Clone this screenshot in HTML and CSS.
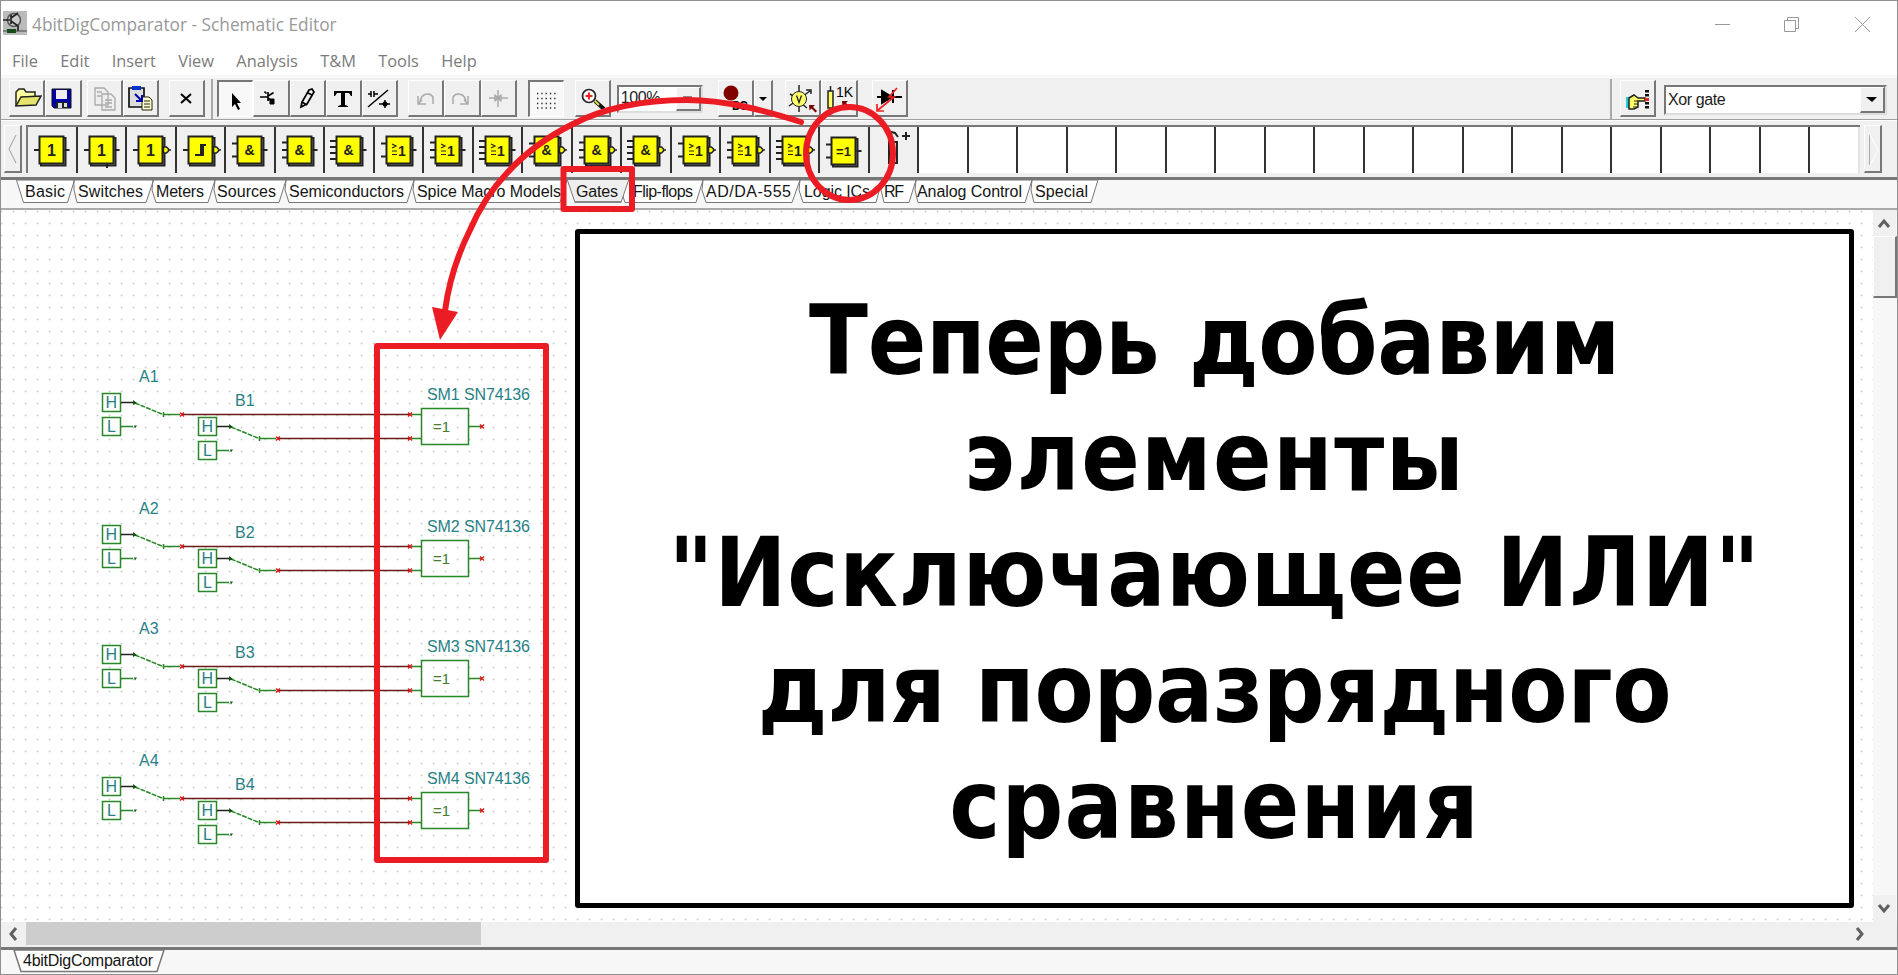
FILE: index.html
```html
<!DOCTYPE html>
<html lang="ru"><head><meta charset="utf-8"><title>4bitDigComparator - Schematic Editor</title>
<link rel="stylesheet" href="styles.css"></head>
<body>
<svg class="defs">
<defs>
<g id="box"><rect x="13" y="11" width="24.500" height="27.500" fill="#b4b4b4"/><rect x="11.500" y="9.500" width="24" height="27" fill="#ff0" stroke="#222" stroke-width="2"/></g>
<path id="in1" d="M6 23h5"/><path id="in2" d="M6 16.500h5M6 29.500h5"/><path id="in3" d="M6 15.500h5M6 23h5M6 30.500h5"/><path id="in4" d="M5 14h6M5 20h6M5 26h6M5 32h6"/>
<path id="out" d="M36.500 23h5"/><path id="inv" d="M36.500 20h3l2 2v2l-2 2h-3z M42 23h2" fill="#ff0" stroke-width="1.500"/>
<text id="and" class="gatetext" x="23.500" y="28" font-size="14">&amp;</text>
<g id="or"><path d="M17 17l4 2-4 2M17 24h5M17 27.500h5" stroke-width="1.200" fill="none"/><text class="gatetext" x="27" y="28.500" font-size="14">1</text></g>
<g id="sw"><path d="M.5.500h18v18H.5zM.5 24.500h18v18H.5zM19 33.500h12M61 21.500h17" class="grn"/><path d="M33 10l28 11.500" class="grn" stroke-dasharray="5 1"/><path d="M19 9.500h14" class="blk"/><path d="M31 7l4 3-4 2z" fill="#151"/><path d="M32 32.500h3l-2 3z" fill="#151"/><path d="M61.500 19v5" class="grn"/></g>
<g id="unit"><use href="#sw" x="102" y="394"/><use href="#sw" x="198" y="418"/>
<text x="105.500" y="409">H</text><text x="107" y="433">L</text><text x="201.500" y="433">H</text><text x="203" y="457">L</text>
<path d="M181 415.500h229M277 439.500h133" stroke="#6b1a1a" stroke-width="1.600"/>
<path d="M411 415.500h11M411 439.500h11M421.500 409.500h47v36h-47zM469 427.500h12" class="grn"/>
<path d="M180 413.500l4 4m0-4l-4 4M276 437.500l4 4m0-4l-4 4M408 413.500l4 4m0-4l-4 4M408 437.500l4 4m0-4l-4 4M480 425.500l4 4m0-4l-4 4" stroke="#e01818" stroke-width="1.400"/>
<text x="433" y="433" fill="#487c30" font-size="15">=1</text></g>
</defs></svg>
<div class="window">
<header class="title">
<svg class="appicon" viewBox="0 0 24 24"><path fill="#bbb" d="M0 0h24v24H0z"/><circle cx="11" cy="9" r="6.500" fill="#ccc" stroke="#555" stroke-width="1.500"/><path d="M0 9h7M8 4v9M8 7l7-5M8 10l7 5v5" stroke="#222" stroke-width="1.700" fill="none"/><path d="M0 20h24" stroke="#444"/><path d="M4 18h9v4H4z" fill="#164a16"/></svg>
<span>4bitDigComparator - Schematic Editor</span>
<svg class="winctl" width="160" height="20"><path d="M3 8.500h15M72.500 4.500h11v11h-11zM75.500 4v-2.500h11v11H84M143 1l15 15m0-15L143 16" fill="none" stroke="#999"/></svg>
</header>
<nav class="menu"><span>File</span><span>Edit</span><span>Insert</span><span>View</span><span>Analysis</span><span>T&amp;M</span><span>Tools</span><span>Help</span></nav>
<div class="toolbar">
<div class="group g1">
<b class="btn"><svg viewBox="0 0 32 32"><path d="M6 24V10l3-3h5l2 3h9v4" fill="#ffffa0" stroke="#222" stroke-width="1.500"/><path d="M6 24l5-9 20-1-5 9z" fill="#e4e46c" stroke="#222" stroke-width="1.500"/></svg></b>
<b class="btn"><svg viewBox="0 0 32 32"><path d="M6 7h19v19H8l-2-2z" fill="#0000a8" stroke="#111"/><path d="M10 8h11v9H10z" fill="#eee"/><path d="M10 20h12v6H10z" fill="#222"/><path d="M12 21h4v5h-4zM18 21h3v4h-3z" fill="#ddd"/></svg></b>
</div>
<div class="group g2">
<b class="btn"><svg viewBox="0 0 32 32" fill="#eee" stroke="#aaa" stroke-width="1.300"><path d="M7 6h9l4 4v13H7zM14 12h9l4 4v12H14z"/><path d="M9 10h5M9 14h4M17 18h7M17 21h7M17 25h7"/></svg></b>
<b class="btn"><svg viewBox="0 0 32 32"><path d="M5 6h15v19H5z" fill="#ddd" stroke="#111" stroke-width="1.700"/><path d="M8 4h9v4H8z" fill="#03c"/><path d="M18 15h7l3 3v10H18z" fill="#ffc" stroke="#221"/><path d="M20 19h6M20 22h6M20 25h6" stroke="#222"/><path d="M11 12l7 7m0-6v6h-6" stroke="#00a" stroke-width="2" fill="none"/></svg></b>
</div>
<div class="group g3"><b class="btn"><svg viewBox="0 0 32 32"><path d="M11 12l10 9m0-9l-10 9" stroke="#000" stroke-width="2"/></svg></b></div>
<i class="sep"></i>
<div class="group g4">
<b class="btn on"><svg viewBox="0 0 32 32"><path d="M13 10v14l3-3 3 6 2-1-3-6h4z"/></svg></b>
<b class="btn"><svg viewBox="0 0 32 32"><path d="M6 15h8M14 10v9M14 14l5-3M14 16l5 4" stroke="#000" stroke-width="1.700" fill="none"/><path d="M10 10h2v2M19 10v2M16 17h4v5h-4z" stroke="#000" fill="#000"/></svg></b>
<b class="btn"><svg viewBox="0 0 32 32"><path d="M10 25l1-5 7-12 3-1 2 3-7 12z M11 20l5 3 M17 11l4 2" stroke="#000" stroke-width="1.700" fill="none"/></svg></b>
<b class="btn"><svg viewBox="0 0 32 32"><path d="M7 9h18v5h-1l-2-3h-4v12l3 1v1H11v-1l3-1V11h-4l-2 3H7z"/></svg></b>
<b class="btn"><svg viewBox="0 0 32 32"><path d="M5 12h3M8 9v6M11 9v6M11 12h4M5 25L25 8M16 22h11M22 18v8" stroke="#000" stroke-width="1.500"/><circle cx="22" cy="22" r="2.500"/></svg></b>
</div>
<div class="group g5">
<b class="btn"><svg viewBox="0 0 32 32" class="dim"><path d="M11 20C12 11 21 10 24 15v7M9 14v8h8M9 22l4-4"/></svg></b>
<b class="btn"><svg viewBox="0 0 32 32" class="dim"><path d="M21 20C20 11 11 10 8 15v7M23 14v8h-8M23 22l-4-4"/></svg></b>
<b class="btn"><svg viewBox="0 0 32 32" class="dim"><path d="M7 16h19M16 8v17M13 12.500v7M19 12.500v7M13 13l3 3-3 3M19 13l-3 3 3 3"/></svg></b>
</div>
<div class="group g6"><b class="btn on"><svg viewBox="0 0 32 32"><path d="M7 10.500h20M7 15.500h20M7 20.500h20M7 25h20" stroke="#222" stroke-width="1.300" stroke-dasharray="1.300 3"/></svg></b></div>
<div class="group g7"><b class="btn"><svg viewBox="0 0 32 32"><circle cx="13" cy="14" r="6.500" fill="#fff" stroke="#222" stroke-width="1.700"/><path d="M9.500 14h7M13 10.500v7" stroke="#e22" stroke-width="2"/><path d="M19 19l9 8" stroke="#111" stroke-width="4"/><path d="M19 19l4 4" stroke="#dd4" stroke-width="2"/></svg></b></div>
<div class="combo zoomlevel"><span>100%</span><b><svg width="12" height="8"><path d="M1 2h9v1L8 5H3L1 3z" fill="#888"/></svg></b></div>
<div class="group g8">
<b class="btn"><svg viewBox="0 0 32 32"><circle cx="12" cy="11" r="7.500" fill="#800000"/><text x="13" y="28" font-size="12" textLength="16">DC</text></svg></b><b class="btn drop"><svg viewBox="0 0 16 32"><path d="M4 15h8l-4 4z"/></svg></b>
</div>
<div class="group g9">
<b class="btn"><svg viewBox="0 0 32 32"><path d="M13 3v27M3 24l21-15M20 8h5v4M4 12l5 3M16 22l5 4" stroke="#222" stroke-width="1.500" fill="none"/><circle cx="13" cy="17" r="7.500" fill="#ff6" stroke="#222"/><path d="M10.500 13.500l2.500 7 2.500-7" fill="none" stroke="#222" stroke-width="1.300"/><path d="M23 23h6l-2 2 4 4-1.500 1.500-4-4-2 2z" fill="#700"/></svg></b>
<b class="btn"><svg viewBox="0 0 32 32"><path d="M6 9h5v17H6zM8.500 4v5M8.500 26v4" fill="#ff6" stroke="#222" stroke-width="1.500"/><text x="14" y="15" font-size="14" font-weight="400">1K</text><path d="M20 19h6l-2 2 4 4-1.500 1.500-4-4-2 2z" fill="#700"/></svg></b>
</div>
<div class="group g10"><b class="btn"><svg viewBox="0 0 32 32"><path d="M4 15h25M9 9v12l10-6zM20 8v13" fill="#000" stroke="#000" stroke-width="2"/><path d="M24 6l-8 9h5L5 28M4 22v7h7" fill="none" stroke="#e22" stroke-width="1.700"/></svg></b></div>
<div class="find"><b class="btn"><svg viewBox="0 0 32 32"><path d="M5 15h3v11H5z" fill="#2cd"/><path d="M8 16l5-3 4 3h7v3h-7v6l-4 2H8z" fill="#ff6" stroke="#222" stroke-width="1.500"/><path d="M17 19h-4M17 22h-4M16 25h-4" stroke="#222"/><path d="M26 8v20" stroke="#111" stroke-width="4" stroke-dasharray="2.500 1.500"/><path d="M24 16h4v3h-4z" fill="#e22"/></svg></b>
<div class="combo part"><span>Xor gate</span><b><svg width="12" height="8"><path d="M0 1h11L6 6z"/></svg></b></div></div>
</div>
<div class="palette">
<b class="arrow"><svg width="16" height="46"><path d="M11 9L4 23l7 14" fill="none" stroke="#999"/></svg></b>
<div class="cells">
<svg><use href="#box"/><use href="#in1"/><use href="#out"/><text class="gatetext" x="23.500" y="28.500">1</text></svg>
<svg><use href="#box"/><use href="#in1"/><use href="#out"/><path d="M29 37v4"/><text class="gatetext" x="23.500" y="28.500">1</text></svg>
<svg><use href="#box"/><use href="#in1"/><use href="#inv"/><text class="gatetext" x="23.500" y="28.500">1</text></svg>
<svg><use href="#box"/><use href="#in1"/><use href="#inv"/><path d="M18 28h6V18h5M21 28h5V18" fill="none"/></svg>
<svg><use href="#box"/><use href="#in2"/><use href="#out"/><use href="#and"/></svg>
<svg><use href="#box"/><use href="#in3"/><use href="#out"/><use href="#and"/></svg>
<svg><use href="#box"/><use href="#in4"/><use href="#out"/><use href="#and"/></svg>
<svg><use href="#box"/><use href="#in2"/><use href="#out"/><use href="#or"/></svg>
<svg><use href="#box"/><use href="#in3"/><use href="#out"/><use href="#or"/></svg>
<svg><use href="#box"/><use href="#in4"/><use href="#out"/><use href="#or"/></svg>
<svg><use href="#box"/><use href="#in2"/><use href="#inv"/><use href="#and"/></svg>
<svg><use href="#box"/><use href="#in3"/><use href="#inv"/><use href="#and"/></svg>
<svg><use href="#box"/><use href="#in4"/><use href="#inv"/><use href="#and"/></svg>
<svg><use href="#box"/><use href="#in2"/><use href="#inv"/><use href="#or"/></svg>
<svg><use href="#box"/><use href="#in3"/><use href="#inv"/><use href="#or"/></svg>
<svg><use href="#box"/><use href="#in4"/><use href="#inv"/><use href="#or"/></svg>
<svg><g transform="translate(0 1)"><use href="#box"/><use href="#in2"/><use href="#out"/><text class="gatetext" x="23.500" y="28" font-size="13">=1</text></g></svg>
<svg><path d="M19 15h8v21h-8zM18 10l3-5 4 1 3 4M32 9h8M36 5v8" fill="none"/></svg>
<svg class="e"></svg><svg class="e"></svg><svg class="e"></svg><svg class="e"></svg><svg class="e"></svg><svg class="e"></svg><svg class="e"></svg><svg class="e"></svg><svg class="e"></svg><svg class="e"></svg><svg class="e"></svg><svg class="e"></svg><svg class="e"></svg><svg class="e"></svg><svg class="e"></svg><svg class="e"></svg><svg class="e"></svg><svg class="e"></svg><svg class="e"></svg>
</div>
<b class="arrow"><svg width="16" height="46"><path d="M4.500 9v30" stroke="#aaa"/><path d="M5 9l8 15-8 15" fill="none" stroke="#fff"/></svg></b>
</div>
<div class="tabs">
<svg width="1120" height="28"><g fill="#fff" stroke="#777">
<path d="M16.500 0l7 22.500h44L74.500 0zM74 0v10l3 12.500h69L153.500 0zM152 10l4 12.500h52L215 0h-62zM214 10l3 12.500h62L286 0h-71zM285 10l4 12.500h118L414 0H286zM413 10l3 12.500H560L567 0H414zM621 10l4 12.500h71L703 0h-82zM702 10l4 12.500h86L800 0h-97zM799 10l4 12.500h73L882 0h-82zM881 10l3 12.500h25L916 0h-34zM915 10l3 12.500h107L1032 0H916zM1031 10l3 12.500h57L1098 0h-66z"/><path d="M567-1l8 23.500h46L629-1z" fill="#eee"/></g><path d="M575 22h46" stroke="#888" stroke-width="2"/>
<g>
<text x="25" y="16.500" textLength="40">Basic</text><text x="78" y="16.500" textLength="65">Switches</text><text x="156" y="16.500" textLength="48">Meters</text><text x="217" y="16.500" textLength="59">Sources</text><text x="289" y="16.500" textLength="115">Semiconductors</text><text x="417" y="16.500" textLength="144">Spice Macro Models</text><text x="576" y="16.500" textLength="42">Gates</text><text x="633" y="16.500" textLength="60">Flip-flops</text><text x="706" y="16.500" textLength="85">AD/DA-555</text><text x="804" y="16.500" textLength="66">Logic ICs</text><text x="884" y="16.500" textLength="20">RF</text><text x="917" y="16.500" textLength="105">Analog Control</text><text x="1035" y="16.500" textLength="53">Special</text></g></svg>
</div>
<main class="work">
<div class="canvas">
<svg class="circuit" width="570" height="712" viewBox="1 211 570 712">
<use href="#unit"/><use href="#unit" y="132"/><use href="#unit" y="252"/><use href="#unit" y="384"/>
<g font-size="16"><text x="139" y="383">A1</text><text x="235" y="407">B1</text><text x="427" y="401" textLength="103">SM1 SN74136</text>
<text x="139" y="515">A2</text><text x="235" y="539">B2</text><text x="427" y="533" textLength="103">SM2 SN74136</text>
<text x="139" y="635">A3</text><text x="235" y="659">B3</text><text x="427" y="653" textLength="103">SM3 SN74136</text>
<text x="139" y="767">A4</text><text x="235" y="791">B4</text><text x="427" y="785" textLength="103">SM4 SN74136</text></g>
</svg>
<div class="note"><p><span class="l1">Теперь добавим</span><span class="l2">элементы</span><span class="l3">"Исключающее ИЛИ"</span><span class="l4">для поразрядного</span><span class="l5">сравнения</span></p></div>
</div>
<aside class="vscroll"><svg width="23" height="26"><path d="M6 17l5-6 5 6" class="chev"/></svg><b></b><i></i><svg width="23" height="27"><path d="M6 10l5 6 5-6" class="chev"/></svg></aside>
</main>
<div class="hscroll"><svg width="25" height="23"><path d="M15 6l-5 6 5 6" class="chev"/></svg><b></b><i></i><svg width="48" height="23"><path d="M8 6l5 6-5 6" class="chev"/></svg></div>
<footer><svg width="300" height="24"><path d="M14 0l7 21.500h136L164 0z" fill="#fff" stroke="#777" stroke-width="1.500"/><text x="23" y="16" textLength="130">4bitDigComparator</text></svg></footer>
</div>
<svg class="marks" width="1898" height="975"><g fill="none" stroke="#ec1c24" stroke-width="6" stroke-linejoin="round"><path d="M563.500 169h68.500v40h-68.500zM377 346h169v514H377z"/><ellipse cx="849.500" cy="153.500" rx="43.500" ry="46.500"/><path d="M801 122C763 110 725 100 687 100C645 100 608 106 573 124C545 138 525 153 507 173C490 191 479 209 470 230C457 256 449 280 445 311" stroke-linecap="round"/></g><path d="M432 307l26 5-18 28z" fill="#ec1c24"/></svg>
</body></html>
```
FILE: styles.css
```css
* { box-sizing: border-box; }
body { margin: 0; width: 1898px; height: 975px; overflow: hidden; position: relative; background: #fff; font-family: "Liberation Sans", Arial, sans-serif; color: #222; }
.defs { position: absolute; width: 0; height: 0; }
.window { height: 975px; border: 1px solid #909090; display: flex; flex-direction: column; background: #f0f0f0; }
svg { display: block; flex: none; }
.title { height: 47px; flex: none; background: #fff; display: flex; align-items: center; padding-left: 2px; gap: 5px; font: 17.300px "Open Sans", sans-serif; color: #999; }
.appicon { width: 24px; height: 24px; margin-top: -3px; }
.title span { flex: 1; }
.winctl { margin-right: 25px; margin-bottom: -2px; }
.menu { height: 27px; flex: none; background: #fff; display: flex; gap: 22.300px; padding: 2px 0 0 11px; font: 16.400px/22px "Open Sans", sans-serif; color: #7b7b7b; }
.toolbar { height: 45px; flex: none; border-bottom: 1px solid #a0a0a0; display: flex; align-items: center; padding-left: 8px; border-top: 3px solid #f8f8f8; }
.group { display: flex; flex: none; }
.btn { width: 36.300px; height: 37px; flex: none; border: 1px solid #fff; border-right: 2px solid #777; border-bottom: 2px solid #777; display: block; }
.btn svg { width: 32px; height: 34px; }
.g2 { margin-left: 5px; }
.g3 { margin-left: 10px; }
.sep { width: 2px; height: 40px; background: #aaa; margin: 0 4px 0 5.500px; }
.g5 { margin-left: 9.500px; }
.g6 { margin-left: 11px; }
.g7 { margin-left: 10.700px; }
.g9 { margin-left: 12px; }
.g10 { margin-left: 14px; }
.on { background: #f8f8f8; border: 1px solid #fff; border-top: 2px solid #777; border-left: 2px solid #777; }
.dim path { fill: none; stroke: #aaa; stroke-width: 1.500; }
.drop { width: 19px; }
.drop svg { width: 16px; }
.combo { display: flex; flex: none; background: #fff; border: 2px solid #777; border-right-color: #ddd; border-bottom-color: #ddd; font-size: 16px; }
.combo span { flex: 1; padding: 4px 2px; letter-spacing: -.4px; }
.combo b { width: 25px; background: #f0f0f0; border: 1px solid #fff; border-right: 2px solid #777; border-bottom: 2px solid #777; display: grid; place-items: center; }
.zoomlevel { width: 86px; height: 28px; margin: 0 15px 0 5.700px; }
.zoomlevel span { padding-top: 2px; }
.find { margin-left: auto; height: 40px; border-left: 2px solid #aaa; display: flex; align-items: center; padding: 0 10px 0 8px; gap: 8px; }
.part { width: 223px; height: 30px; margin-top: 3px; }
.palette { height: 57px; flex: none; padding: 4px 14px 0 3px; display: flex; gap: 4px; border-top: 1px solid #fff; }
.arrow { width: 18px; height: 48px; flex: none; border: 1px solid #fff; border-right: 2px solid #777; border-bottom: 2px solid #777; }
.cells { width: 1834px; height: 48px; flex: none; border-top: 2px solid #777; border-left: 2px solid #777; display: grid; grid-template-columns: repeat(37, 1fr); }
.cells svg { width: 100%; height: 46px; border-right: 2px solid #333; background: #f0f0f0; overflow: hidden; stroke: #222; stroke-width: 2; }
.cells .e { background: #fff; }
.cells svg:last-child { border-color: #e4e4e4; }
.gatetext { stroke: none; fill: #222; font-family: "Liberation Sans", sans-serif; font-weight: bold; text-anchor: middle; }
.tabs { height: 33px; flex: none; border-top: 3px solid #777; border-bottom: 2px solid #aaa; background: #f7f7f7; font-size: 16px; }
.tabs svg, footer svg { margin-left: -1px; }
.tabs text, footer text { fill: #151515; }
.work { height: 712px; flex: none; display: flex; }
.canvas { width: 1872px; position: relative; background: radial-gradient(circle at 1.500px 1.500px, #d0d0d0 0 .8px, transparent 1.200px) -1px 0 / 12px 12px #fff; }
.circuit { font-size: 16px; fill: #277f86; }
.grn { stroke: #278827; fill: none; stroke-width: 1.500; }
.blk { stroke: #222; stroke-width: 1.500; }
.note { position: absolute; left: 574px; top: 19px; width: 1279px; height: 679px; border: 5px solid #000; border-radius: 3px; background: #fff; }
.note p { margin: 50px 0 0; font: bold 96px/115.900px "DejaVu Sans Condensed", "DejaVu Sans", sans-serif; font-stretch: condensed; color: #000; display: flex; flex-direction: column; align-items: center; white-space: nowrap; }
.l1 { letter-spacing: -.35px; }
.l2 { letter-spacing: 1.400px; }
.l3 { letter-spacing: .7px; }
.l4 { letter-spacing: -.3px; }
.l5 { letter-spacing: 1.200px; }
.vscroll { width: 24px; display: flex; flex-direction: column; background: #f7f7f7; }
.vscroll b { height: 62px; background: #f0f0f0; border: 1px solid #fff; border-right: 2px solid #777; border-bottom: 2px solid #777; }
.vscroll svg, .hscroll { background: #f0f0f0; }
.vscroll i, .hscroll i { flex: 1; }
.chev { fill: none; stroke: #606060; stroke-width: 3; }
.hscroll { height: 25px; flex: none; display: flex; }
.hscroll b { width: 455px; height: 23px; background: #cdcdcd; }
footer { flex: 1; min-height: 0; border-top: 3px solid #777; background: #f7f7f7; font-size: 16px; }
.marks { position: absolute; left: 0; top: 0; }
```
